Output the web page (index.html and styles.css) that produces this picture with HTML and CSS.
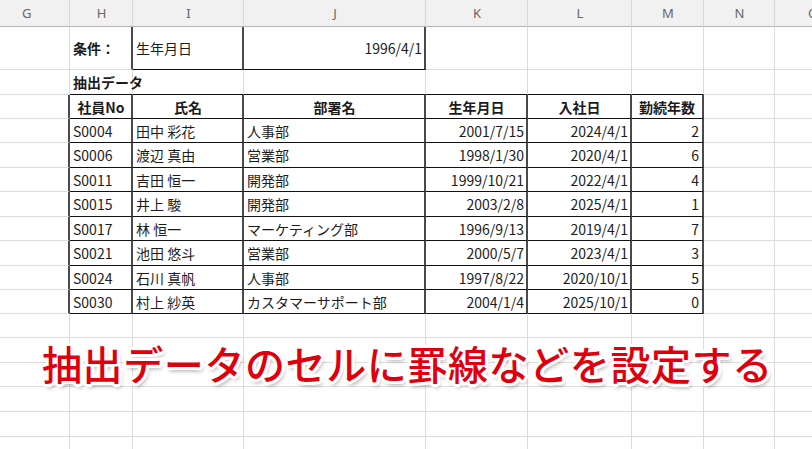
FILE: index.html
```html
<!DOCTYPE html>
<html lang="ja">
<head>
<meta charset="utf-8">
<link rel="stylesheet" href="styles.css">
</head>
<body>
<div class="sheet">
  <div class="row hdr">
    <div class="c">G</div><div class="c">H</div><div class="c">I</div><div class="c">J</div><div class="c">K</div><div class="c">L</div><div class="c">M</div><div class="c">N</div><div class="c last">O</div>
  </div>
  <div class="row r-cond">
    <div class="c"></div>
    <div class="c b bold dr">条件：</div>
    <div class="c dr db">生年月日</div>
    <div class="c dr db num">1996/4/1</div>
    <div class="c"></div><div class="c"></div><div class="c"></div><div class="c"></div><div class="c"></div>
  </div>
  <div class="row r25">
    <div class="c"></div>
    <div class="c bold db spill">抽出データ</div>
    <div class="c db"></div><div class="c db"></div><div class="c db"></div><div class="c db"></div><div class="c db"></div>
    <div class="c"></div><div class="c"></div>
  </div>
  <div class="row r24 t">
    <div class="c"></div>
    <div class="c bold ctr">社員No</div><div class="c bold ctr">氏名</div><div class="c bold ctr">部署名</div><div class="c bold ctr">生年月日</div><div class="c bold ctr">入社日</div><div class="c bold ctr">勤続年数</div>
    <div class="c"></div><div class="c"></div>
  </div>
  <div class="row r24 t">
    <div class="c"></div>
    <div class="c">S0004</div><div class="c">田中 彩花</div><div class="c">人事部</div><div class="c num">2001/7/15</div><div class="c num">2024/4/1</div><div class="c num">2</div>
    <div class="c"></div><div class="c"></div>
  </div>
  <div class="row r25 t">
    <div class="c"></div>
    <div class="c">S0006</div><div class="c">渡辺 真由</div><div class="c">営業部</div><div class="c num">1998/1/30</div><div class="c num">2020/4/1</div><div class="c num">6</div>
    <div class="c"></div><div class="c"></div>
  </div>
  <div class="row r24 t">
    <div class="c"></div>
    <div class="c">S0011</div><div class="c">吉田 恒一</div><div class="c">開発部</div><div class="c num">1999/10/21</div><div class="c num">2022/4/1</div><div class="c num">4</div>
    <div class="c"></div><div class="c"></div>
  </div>
  <div class="row r25 t">
    <div class="c"></div>
    <div class="c">S0015</div><div class="c">井上 駿</div><div class="c">開発部</div><div class="c num">2003/2/8</div><div class="c num">2025/4/1</div><div class="c num">1</div>
    <div class="c"></div><div class="c"></div>
  </div>
  <div class="row r24 t">
    <div class="c"></div>
    <div class="c">S0017</div><div class="c">林 恒一</div><div class="c">マーケティング部</div><div class="c num">1996/9/13</div><div class="c num">2019/4/1</div><div class="c num">7</div>
    <div class="c"></div><div class="c"></div>
  </div>
  <div class="row r25 t">
    <div class="c"></div>
    <div class="c">S0021</div><div class="c">池田 悠斗</div><div class="c">営業部</div><div class="c num">2000/5/7</div><div class="c num">2023/4/1</div><div class="c num">3</div>
    <div class="c"></div><div class="c"></div>
  </div>
  <div class="row r24 t">
    <div class="c"></div>
    <div class="c">S0024</div><div class="c">石川 真帆</div><div class="c">人事部</div><div class="c num">1997/8/22</div><div class="c num">2020/10/1</div><div class="c num">5</div>
    <div class="c"></div><div class="c"></div>
  </div>
  <div class="row r24 t">
    <div class="c"></div>
    <div class="c">S0030</div><div class="c">村上 紗英</div><div class="c">カスタマーサポート部</div><div class="c num">2004/1/4</div><div class="c num">2025/10/1</div><div class="c num">0</div>
    <div class="c"></div><div class="c"></div>
  </div>
  <div class="row r24"><div class="c"></div><div class="c"></div><div class="c"></div><div class="c"></div><div class="c"></div><div class="c"></div><div class="c"></div><div class="c"></div><div class="c"></div></div>
  <div class="row r25"><div class="c"></div><div class="c"></div><div class="c"></div><div class="c"></div><div class="c"></div><div class="c"></div><div class="c"></div><div class="c"></div><div class="c"></div></div>
  <div class="row r24"><div class="c"></div><div class="c"></div><div class="c"></div><div class="c"></div><div class="c"></div><div class="c"></div><div class="c"></div><div class="c"></div><div class="c"></div></div>
  <div class="row r25"><div class="c"></div><div class="c"></div><div class="c"></div><div class="c"></div><div class="c"></div><div class="c"></div><div class="c"></div><div class="c"></div><div class="c"></div></div>
  <div class="row r25"><div class="c"></div><div class="c"></div><div class="c"></div><div class="c"></div><div class="c"></div><div class="c"></div><div class="c"></div><div class="c"></div><div class="c"></div></div>
  <div class="row r25"><div class="c"></div><div class="c"></div><div class="c"></div><div class="c"></div><div class="c"></div><div class="c"></div><div class="c"></div><div class="c"></div><div class="c"></div></div>

  <div class="caption">抽出データのセルに罫線などを設定する</div>
</div>
</body>
</html>
```

FILE: styles.css
```css
html, body {
  margin: 0;
  padding: 0;
  background: #fff;
  overflow: hidden;
}
body {
  width: 812px;
  height: 449px;
}
.sheet {
  position: relative;
  margin-left: -18px;
  width: 880px;
  font-family: "Noto Sans CJK JP", "Noto Sans", sans-serif;
  font-size: 14px;
  color: #1c1c1c;
}
.row {
  display: grid;
  grid-template-columns: 88px 63px 111px 182px 102px 104px 72px 71px 87px;
}
.c {
  box-sizing: border-box;
  border-right: 1px solid #dcdcdc;
  border-bottom: 1px solid #dcdcdc;
  display: flex;
  align-items: center;
  padding: 0 2px 0 3px;
  white-space: nowrap;
  overflow: hidden;
  line-height: 1;
}
.spill { overflow: visible; position: relative; z-index: 1; }
.hdr {
  height: 27px;
  background: #f1f1f1;
}
.hdr .c {
  justify-content: center;
  color: #666;
  font-family: "Noto Sans", sans-serif;
  font-size: 13px;
  border-right: 1px solid #d6d6d6;
  border-bottom: 1px solid #b5b5b5;
}
.hdr .c:first-child { justify-content: flex-start; padding-left: 40px; }
.hdr .last { justify-content: flex-start; padding-left: 33px; }
.r-cond { height: 43px; }
.r25 { height: 25px; }
.r24 { height: 24px; }
.bold { font-weight: 700; }
.ctr { justify-content: center; }
.num { justify-content: flex-end; }
.dr { border-right: 2px solid #4a4a4a; }
.db { border-bottom: 1px solid #111; }
.t .c:first-child { border-right: 2px solid #4a4a4a; }
.t .c:nth-child(n+2):nth-child(-n+7) {
  border-right: 2px solid #4a4a4a;
  border-bottom: 1px solid #111;
}
.t .c:nth-child(7) { padding-right: 3px; }
.caption {
  position: absolute;
  left: 60px;
  top: 341px;
  font-family: "Noto Sans CJK JP", sans-serif;
  font-size: 40px;
  font-weight: 500;
  letter-spacing: 0.6px;
  line-height: 44px;
  color: #e0000d;
  white-space: nowrap;
  text-shadow:
    3px 0 0 #fff, -3px 0 0 #fff, 0 3px 0 #fff, 0 -3px 0 #fff,
    2px 2px 0 #fff, -2px 2px 0 #fff, 2px -2px 0 #fff, -2px -2px 0 #fff,
    3px 1px 0 #fff, -3px 1px 0 #fff, 3px -1px 0 #fff, -3px -1px 0 #fff,
    1px 3px 0 #fff, -1px 3px 0 #fff, 1px -3px 0 #fff, -1px -3px 0 #fff,
    2px 4px 4px rgba(0,0,0,0.35);
}
```
